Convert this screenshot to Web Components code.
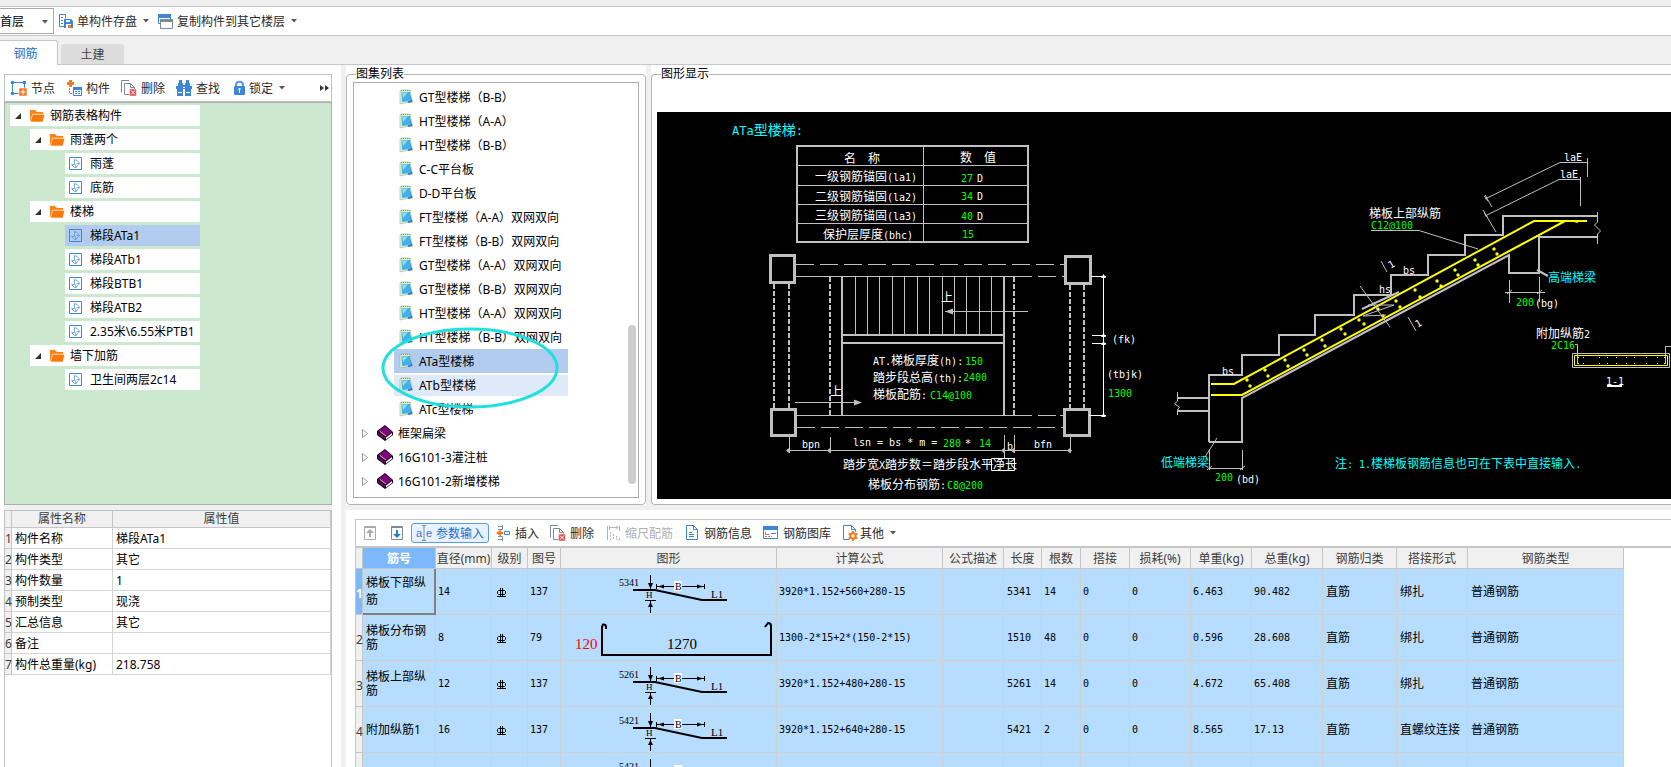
<!DOCTYPE html>
<html lang="zh-CN">
<head>
<meta charset="utf-8">
<title>钢筋表格构件</title>
<style>
html,body{height:100%;margin:0}
body{font:12px/16px "Noto Sans","Noto Sans CJK SC",sans-serif;color:#000;background:#f0f0f0;overflow:hidden;
--line:#c5c6ca;--frame:#acacac;--face:#f0f0f0}
</style>
</head>
<body>
<app-shell></app-shell>
<script>
const ICONS={
save:'<path fill="none" stroke="#3d85d6" d="M5.500 13.500h-5v-12h6v4M2 4.500h2M2 7.500h2M2 10.500h2"/><path fill="#3d85d6" d="M5 6h7l2 2v7H5z"/><path fill="#fff" d="M7 7h4v2H7zM7 11h5v4H7z"/><path fill="#f47a20" d="M9 12h3v3H9z"/>',
copy:'<path fill="#fff" stroke="#3d85d6" d="M-.5 1.500h12v9h-12z"/><path fill="#3d85d6" d="M-1 1h13v4H-1z"/><path fill="#fff" stroke="#7c8c96" d="M1.500 6.500h12v9h-12z"/><path fill="#7c8c96" d="M1 6h13v3H1z"/>',
node:'<path fill="none" stroke="#3d85d6" d="M1.500 2.500h12v11h-12z"/><path fill="#3d85d6" d="M0 1h3v3H0zM12 1h3v3h-3zM0 12h3v3H0z"/><path fill="#f47a20" stroke="#fff" stroke-width=".5" d="M8 8h8v8H8z"/><path stroke="#fff" d="M12 9.500v5M9.500 12h5"/>',
part:'<path fill="#f47a20" d="M3 0h3v2h2v3H6v2H3V5H1V2h2z"/><path fill="none" stroke="#7c8c96" stroke-dasharray="2 1" d="M3.500 8v5.500H7"/><path fill="#fff" stroke="#3d85d6" d="M7.500 7.500h8v8h-8z"/><path fill="#3d85d6" d="M7 7h9v3H7zM9 11h2v1H9zM12 11h2v1h-2zM9 13h2v1H9zM12 13h2v1h-2z"/>',
del:'<path fill="#fff" stroke="#7c8c96" d="M.5 12.500V.5H8M3.500 14.500v-11h6l4 4v7z"/><path fill="none" stroke="#7c8c96" d="M9.500 3.500v4h4"/><path fill="#d9534f" stroke="#fff" stroke-width=".5" d="M8.500 9h7v7h-7z"/><path stroke="#fff" d="M10 10.500l4 4M14 10.500l-4 4"/>',
find:'<path fill="#3d85d6" d="M3 0h3v3h1v2h2V3h1V0h3v3h1v3h2v3h-1v7H9V9H7v7H1V9H0V6h2V3h1z"/><path fill="#fff" d="M2 12h4v1H2zM10 12h4v1h-4zM7 7h2v1H7z"/>',
lock:'<path fill="none" stroke="#5b9bd5" stroke-width="2" d="M5 7V5c0-4.500 7-4.500 7 0v2"/><rect x="3" y="6" width="11" height="9" rx="1" fill="#3d85d6"/><path fill="#fff" d="M7.500 8h2v2h-2zM8 10h1v3H8z"/>',
up:'<path fill="#fff" stroke="#aaa" d="M2.500 1.500h11v13h-11z"/><path fill="#aaa" d="M3 2h10v1H3zM8 4l4 4H9v4H7V8H4z"/>',
down:'<path fill="#fff" stroke="#7c8c96" d="M2.500 1.500h11v13h-11z"/><path fill="#7c8c96" d="M3 2h10v1H3z"/><path fill="#2f78cc" d="M8 13l4-4H9V5H7v4H4z"/>',
ae:'<text x="0" y="12" font-family="Liberation Sans" font-size="11" fill="#2f78cc">a</text><text x="10" y="12" font-family="Liberation Sans" font-size="11" fill="#2f78cc">e</text><path fill="none" stroke="#7c8c96" d="M6 .5h4M8 .5v15M6 15.500h4"/>',
insert:'<path fill="none" stroke="#7c8c96" d="M3 1.500h4.500v3H3M3 11.500h4.500v3H3M7.500 0v2M7.500 14v2"/><path fill="#f47a20" d="M1 8l5-3.500V7h2v2H6v2.500z"/><path fill="none" stroke="#3d85d6" d="M9.500 6.500h5v3h-5z"/>',
scale:'<g fill="none" stroke="#b5b5b5"><path d="M2.500 1v14M5 2.500h8M4.500 1v4M14.500 1v5M11 .5l2 2-2 2"/><path d="M5.500 7v8M8.500 9v6M11.500 11v4M14.500 13v2" stroke-dasharray="2 1"/></g>',
info:'<path fill="#fff" stroke="#3d85d6" d="M2.500.5h7l4 4v10h-11z"/><path fill="none" stroke="#3d85d6" d="M9.500.5v4h4M5 7.500h3M5 9.500h5M5 11.500h5"/>',
lib:'<path fill="#fff" stroke="#3d85d6" d="M.5 2.500h14v11H.5z"/><path fill="#3d85d6" d="M0 1h15v4H0z"/><path fill="none" stroke="#7c8c96" d="M2.500 7v2.500h4"/><path stroke="#f47a20" stroke-dasharray="2 1" d="M2 11.500h7"/><path stroke="#3d85d6" d="M8 8.500h5"/>',
other:'<path fill="#fff" stroke="#3d85d6" d="M1.500.5h8l4 4v10h-12z"/><path fill="none" stroke="#3d85d6" d="M9.500.5v4h4"/><circle cx="11" cy="11" r="5" fill="#fff"/><path stroke="#f47a20" stroke-width="2" d="M11 6v10M6.700 8.500l8.600 5M6.700 13.500l8.600-5"/><circle cx="11" cy="11" r="2.700" fill="#fff" stroke="#f47a20" stroke-width="2"/>',
folder:'<path fill="#f9861a" d="M1 2h5l2 2h6v2H4L2 13H1z"/><path fill="#f9780a" stroke="#fff" stroke-width=".6" d="M3.500 6.300H15.700L14 14H1.500z"/>',
leaf:'<path fill="none" stroke="#3d85d6" d="M1.500 1.500h12v12h-12z"/><path fill="none" stroke="#5b9bd5" stroke-width=".8" d="M6.500 3.500v5H3.500M6 4l3 0M11.500 7.500H8.500M7.500 11.500v-3M8.500 4l3.500 3.500-4.500 4M3.500 8.500l3 3h2"/>',
note:'<path fill="#e4efc4" stroke="#9ab0a0" stroke-width=".6" d="M1 2.500l1-1.500h9l2.500 12L5 14l-4 1z"/><path fill="#3a6fc4" d="M10 3l3.500 10L9 14z"/><path fill="#3fb2ea" d="M2.500 3h8.500l1 9-9 1z"/><path fill="#8edaf6" d="M3 3.500h6L4 9z"/><path stroke="#b58b50" stroke-dasharray="1 1" d="M2 1.500h9"/>',
book:'<path fill="#000" d="M0 6L8 0l8 7v3l-8 6-8-6z"/><path fill="#800080" d="M1 6l7-5 7 6-6 4.500z"/><path fill="#fff" d="M9 12.500l6-4.500v2l-6 4.500z"/><path fill="#800080" d="M1 7.500l7 5v2L1 9.500z"/><path stroke="#fff" stroke-width=".7" d="M3 6.500l6 4.500"/>'
};
const svgIcon=n=>`<svg class="i" width="16" height="16" viewBox="0 0 16 16" overflow="visible" aria-hidden="true">${ICONS[n]}</svg>`;
const CARET='<svg width="6" height="4" viewBox="0 0 6 4" aria-hidden="true"><path fill="#555" d="M0 0h6L3 3.500z"/></svg>';
const define=(name,render)=>customElements.define(name,class extends HTMLElement{
  constructor(){super();this.attachShadow({mode:"open"})}
  connectedCallback(){this.shadowRoot.innerHTML=render(this)}
});

define("tool-button",el=>`<style>
:host{display:block;flex:none}
button{display:flex;align-items:center;gap:4px;height:20px;padding:0 4px;border:1px solid transparent;border-radius:3px;background:none;font:inherit;color:#2b2b2b;white-space:nowrap}
:host([active]) button{border-color:#5a9be0;background:#e8f2fd;color:#1a6fd0}
:host([menu]) button{gap:2px}
button:disabled{color:#b0b0b0}
.t{padding-top:2px}
.i{flex:none;display:block} .c{margin-left:4px;display:flex}
</style><button type="button" ${el.hasAttribute("off")?"disabled":""} ${el.title?`aria-label="${el.title}"`:""}>${svgIcon(el.getAttribute("icon"))}${el.title?"":'<span class="t"><slot></slot></span>'}${el.hasAttribute("menu")?`<span class="c">${CARET}</span>`:""}</button>`);

define("top-bar",()=>`<style>
:host{display:block;padding-top:6px;background:var(--face)}
.bar{display:flex;align-items:center;height:28px;background:#fff;border:1px solid var(--line);border-width:1px 0}
.s{position:relative;display:flex}
select{appearance:none;box-sizing:border-box;width:54px;height:26px;border:1px solid #aaa;border-left:0;background:#fff;font:inherit;padding:2px 0 0;margin:0;color:#000}
.s svg{position:absolute;right:6px;top:12px}
</style><div class="bar"><span class="s"><select aria-label="楼层"><option>首层</option></select>${CARET}</span>
<tool-button icon="save" menu>单构件存盘</tool-button><tool-button icon="copy" menu>复制构件到其它楼层</tool-button></div>`);

define("tab-strip",()=>`<style>
:host{display:flex;align-items:flex-end;gap:3px;height:28px;border-bottom:1px solid var(--line);background:var(--face)}
button{box-sizing:border-box;border:0;font:inherit;padding:1px 0 0;margin:0}
.on{width:58px;height:25px;margin-bottom:-1px;background:#fff;color:#1a6fd0;border:1px solid var(--line);border-width:1px 1px 0 0;border-radius:0 3px 0 0;padding:2px 6px 0 0}
.off{width:63px;height:20px;background:#dcdcdc;color:#444;border-radius:3px 3px 0 0;padding-top:2px}
</style><button type="button" class="on">钢筋</button><button type="button" class="off">土建</button>`);

const TREE=[[0,"钢筋表格构件"],[1,"雨蓬两个"],[2,"雨蓬"],[2,"底筋"],[1,"楼梯"],[2,"梯段ATa1",1],[2,"梯段ATb1"],[2,"梯段BTB1"],[2,"梯段ATB2"],[2,"2.35米\\6.55米PTB1"],[1,"墙下加筋"],[2,"卫生间两层2c14"]];
define("member-tree",()=>`<style>
:host{display:flex;flex-direction:column;flex:1;min-height:0}
.bar{display:flex;align-items:center;gap:1px;height:26px;border:1px solid #c0c0c0;background:#fff;padding-left:1px}
.more{margin-left:auto;margin-right:2px;border:0;background:none;padding:0;display:flex}
ul{list-style:none;margin:0;padding:2px 0 0 5px;flex:1;border:1px solid var(--frame);background:#cce8cf}
li{display:flex;align-items:center;box-sizing:border-box;width:190px;height:21px;margin-bottom:3px;background:#fff;white-space:nowrap}
li.l1{margin-left:20px;width:170px} li.l2{margin-left:55px;width:135px;padding-left:3px;gap:6px}
li.sel{background:#b1ccee}
li>span:last-child{padding-top:1px}
.e{margin:0 8px 0 5px} .f{display:flex;margin-right:5px}
</style><div class="bar"><tool-button icon="node">节点</tool-button><tool-button icon="part">构件</tool-button><tool-button icon="del">删除</tool-button><tool-button icon="find">查找</tool-button><tool-button icon="lock" menu>锁定</tool-button><button type="button" class="more" aria-label="更多"><svg width="9" height="6" viewBox="0 0 9 6"><path fill="#333" d="M0 0l4 3-4 3zM5 0l4 3-4 3z"/></svg></button></div>
<ul>${TREE.map(([l,t,s])=>`<li class="l${l}${s?" sel":""}">${l<2?`<svg class="e" width="6" height="6" viewBox="0 0 6 6"><path fill="#333" d="M6 0v6H0z"/></svg><span class="f">${svgIcon("folder")}</span>`:svgIcon("leaf")}<span>${t}</span></li>`).join("")}</ul>`);

const PROPS=[["构件名称","梯段ATa1"],["构件类型","其它"],["构件数量","1"],["预制类型","现浇"],["汇总信息","其它"],["备注",""],["构件总重量(kg)","218.758"]];
define("property-grid",()=>`<style>
:host{display:block;height:257px;border:1px solid #c0c0c0;border-bottom:0;background:#fff;box-sizing:border-box}
table{width:100%;table-layout:fixed;border-collapse:separate;border-spacing:0}
th,td{box-sizing:border-box;height:21px;padding:2px 0 0 3px;border:solid #d4d4d4;border-width:0 1px 1px 0;text-align:left;font-weight:400;white-space:nowrap}
thead th{height:17px;padding:0;background:var(--face);border-color:var(--line);text-align:center;color:#3c3c3c;line-height:16px}
tbody th{padding:2px 0 0;background:var(--face);color:#3c3c3c;text-align:center;border-color:var(--line)}
</style><table><colgroup><col style="width:7px"><col style="width:101px"><col></colgroup><thead><tr><th></th><th>属性名称</th><th>属性值</th></tr></thead><tbody>${PROPS.map((p,i)=>`<tr><th>${i+1}</th><td>${p[0]}</td><td>${p[1]}</td></tr>`).join("")}</tbody></table>`);

define("group-box",el=>`<style>
:host{display:flex;background:#fff;padding-top:1px;min-height:0;min-width:0}
fieldset{flex:1;display:flex;flex-direction:column;min-width:0;min-height:0;margin:0;padding:0 6px;border:1px solid #b4b4b4;border-radius:4px}
:host([open-end]) fieldset{border-right:0;border-radius:4px 0 0 4px;padding:0 0 5px 5px}
legend{padding:0;margin-left:3px;line-height:16px}
:host([open-end]) legend{margin-left:4px}
</style><fieldset><legend>${el.getAttribute("label")}</legend><slot></slot></fieldset>`);

const ATLAS=["GT型楼梯（B-B）","HT型楼梯（A-A）","HT型楼梯（B-B）","C-C平台板","D-D平台板","FT型楼梯（A-A）双网双向","FT型楼梯（B-B）双网双向","GT型楼梯（A-A）双网双向","GT型楼梯（B-B）双网双向","HT型楼梯（A-A）双网双向","HT型楼梯（B-B）双网双向","ATa型楼梯","ATb型楼梯","ATc型楼梯"];
define("atlas-list",()=>`<style>
:host{display:block;position:relative;flex:1;margin-bottom:6px;border:1px solid var(--frame);overflow:hidden}
ul{list-style:none;margin:0;padding:2px 0 0 40px}
li{display:flex;align-items:center;gap:4px;box-sizing:border-box;height:24px;width:174px;padding-left:5px;white-space:nowrap}
li span{padding-top:1px}
.sel{background:#b1ccee} .hot{background:linear-gradient(#dee9fa,#dee9fa) 0 2px/100% 21px no-repeat}
.b{margin-left:-40px;padding-left:8px;gap:5px} .b .i{margin-left:4px}
.thumb{position:absolute;right:2px;top:242px;width:8px;height:159px;border-radius:4px;background:#cdcdcd}
.ring{position:absolute;left:27px;top:243px}
</style><ul>${ATLAS.map((t,i)=>`<li class="${i==11?"sel":i==12?"hot":""}">${svgIcon("note")}<span>${t}</span></li>`).join("")}${["框架扁梁","16G101-3灌注桩","16G101-2新增楼梯"].map(t=>`<li class="b"><svg width="6" height="9" viewBox="0 0 6 9"><path fill="#fff" stroke="#999" d="M.5.5v8l5-4z"/></svg>${svgIcon("book")}<span>${t}</span></li>`).join("")}</ul>
<div class="thumb"></div><svg class="ring" width="180" height="84"><ellipse cx="89" cy="42" rx="87" ry="39" fill="none" stroke="#1fdfdf" stroke-width="3"/></svg>`);

/* CAD drawing helpers: Latin runs use a 6px-pitch monospace, Chinese runs a 12px face */
const esc=s=>s.replace(/</g,"&lt;");
const T=(x,y,s,c="w",big)=>`<text x="${x}" y="${y+5}" class="${c}">${s.match(/[\x00-\x7f]+|[^\x00-\x7f]+/g).map(r=>/[\x00-\x7f]/.test(r)?`<tspan class="${big?"m2":"m"}">${esc(r)}</tspan>`:`<tspan class="${big?"z2":"z"}">${r}</tspan>`).join("")}</text>`;
const P=(d,k="a")=>`<path class="${k}" d="${d}"/>`;
const DOTS=[[1247,380,1250,386],[1265,370,1268,376],[1285,360,1288,366],[1304,350,1307,355],[1322,340,1325,346],[1341,329,1345,334],[1359,320,1364,324],[1378,309,1383,316],[1396,301,1400,307],[1415,290,1420,297],[1437,281,1441,286],[1455,270,1458,275],[1475,260,1478,265],[1494,249,1497,254]];
const drawing=()=>[
T(732,130,"ATa型楼梯:","c",1),
P("M797 146H1028V242H797Z","b"),P("M923.500 146V242M797 165.500H1028M797 185.500H1028M797 204.500H1028M797 223.500H1028"),
T(844,158,"名　称"),T(960,157,"数　值"),
T(815,176,"一级钢筋锚固(la1)"),T(815,196,"二级钢筋锚固(la2)"),T(815,215,"三级钢筋锚固(la3)"),T(823,234,"保护层厚度(bhc)"),
T(961,177,"27","g"),T(977,177,"D"),T(961,195,"34","g"),T(977,195,"D"),T(961,215,"40","g"),T(977,215,"D"),T(962,233,"15","g"),
P("M770.500 255.500h24v27h-24zM1065.500 256.500h25v27h-25zM771.500 409.500h24v26h-24zM1064.500 409.500h25v26h-25z","k"),
P("M796 264.500H1064M797 427.500H1063","a dash"),P("M796 276.500H1032M1038 276.500h18M1062 276.500h3M797 415.500H1032M1038 415.500h18M1060 415.500h3"),
P("M774 284V408M789 284V408M1070 285V408M1084 285V408M830 277V415M1014 277V415","b dv"),
P("M842 277V415M1004 277V415M842 335H1004M842 343H1004","b"),
P([855,867,879,892,904,917,929,942,954,966,979,991].map(x=>`M${x}.500 277V334`).join("")),
T(941,297,"上"),T(830,391,"上"),P("M945 311.500H1028M795 402.500H861"),P("M945 311.500l8-3v6zM862 402.500l-8-3v6z","f"),
P("M1103.500 276V416M1091 276.500h15M1092 335.500h14M1092 343.500h14M1089 415.500h17","h"),P("M1101 278h5l-2.500-4zM1101 337h5l-2.500-4zM1101 345h5l-2.500-4zM1101 417h5l-2.500-4z","fw"),
T(1112,338,"(fk)"),T(1107,373,"(tbjk)"),T(1108,392,"1300","g"),
T(873,360,"AT.梯板厚度(h):"),T(965,360,"150","g"),T(873,377,"踏步段总高(th):"),T(963,376,"2400","g"),T(873,394,"梯板配筋:"),T(930,394,"C14@100","g"),
P("M787 450.500H1072M789.500 436V453M830.500 437V453M1004.500 435V458M1014.500 435V453M1070.500 436V453"),
P("M789 448v5l-3-2.500zM830 448v5l-3-2.500zM1004 448v5l-3-2.500zM1014 448v5l-3-2.500zM1070 448v5l-3-2.500z","f"),
T(802,443,"bpn"),T(853,441,"lsn = bs * m ="),T(943,442,"280","g"),T(965,442,"*"),T(979,442,"14","g"),T(1007,445,"b"),T(1034,443,"bfn"),
T(843,464,"踏步宽X踏步数＝踏步段水平净长"),P("M991.500 458.500h23v12h-23z","h"),
T(868,484,"梯板分布钢筋:"),T(947,484,"C8@200","g"),
P("M1209 442V375H1242V355H1279V335H1315V315H1354V295H1391V275H1428V255H1465V235H1503V216H1598M1209 442H1242V398L1509 255V273H1539V237H1598M1177 398H1209M1177 411H1209","b"),
P("M1177.500 392V401l-3 3 5 3-2 3V415M1597.500 212V222l-3 3 6 6-3 3V244"),
P("M1211 384H1234L1534 221H1587M1211 395H1242L1565 221M1574 221l4 1","y"),
DOTS.map(([a,b,c,d])=>`<circle class="yf" cx="${a}" cy="${b}" r="1.700"/><circle class="yf" cx="${c}" cy="${d}" r="1.700"/>`).join(""),
P("M1587.500 158V177M1588 162.500H1560L1485 199M1485 195L1492 207M1484 196l4 5M1580.500 177V206M1580 179.500H1559L1485 216M1483 210L1496 232M1484 213l4 5"),
T(1564,156,"laE"),T(1560,173,"laE"),T(1369,213,"梯板上部纵筋"),T(1371,224,"C12@100","g"),P("M1371 230.500H1419L1478 249"),
T(1403,269,"bs"),T(1379,288,"hs"),T(1222,370,"bs"),
P("M1381 261L1387 272M1408 317L1416 331M1360 286L1390 327M1363 316L1394 305H1368M1363 316L1386 315"),P("M1362 309L1399 292","b"),
'<text class="w m" transform="rotate(-30 1391 264)" x="1388" y="268">1</text><text class="w m" transform="rotate(-30 1418 323)" x="1415" y="327">1</text>',
T(1548,277,"高端梯梁","c"),P("M1537 270L1548 276","b"),P("M1505 292.500H1545M1509.500 280V303M1539.500 277V302M1507 294l5-4M1537 294l5-4"),
T(1516,301,"200","g"),T(1535,302,"(bg)"),
T(1536,333,"附加纵筋2"),T(1551,344,"2C16","g"),P("M1575 344.500h2.500V364M1671 346.500h-5.500V364M1572.500 353.500h97v14h-97z"),P("M1574.500 355.500h93v10h-93z","yy"),
P([1578,1583,1599,1607,1616,1626,1634,1646,1657,1664].map(x=>`M${x} 357.500h1M${x} 363.500h1`).join(""),"yy"),
T(1606,380,"1-1"),P("M1607 386H1622","hw"),
T(1161,462,"低端梯梁","c"),P("M1217 438L1205 457M1209.500 450V470M1242.500 450V470M1209 468.500H1243M1207 470l5-4M1240 470l5-4"),
T(1215,476,"200","g"),T(1236,478,"(bd)"),
T(1335,463,"注: 1.楼梯板钢筋信息也可在下表中直接输入.","c")
].join("");
define("cad-view",()=>`<style>
:host{display:block;flex:1;min-height:0;margin-top:30px;background:#000;overflow:hidden}
svg{display:block}
path{fill:none;stroke:#c0c0c0} .b{stroke-width:2} .k{stroke-width:3} .dash{stroke-dasharray:18 6} .dv{stroke-dasharray:5 2}
.h{stroke:#fff} .hw{stroke:#fff;stroke-width:2} .f{fill:#c0c0c0;stroke:none} .fw{fill:#fff;stroke:none}
.y{stroke:#ff0;stroke-width:2} .yy{stroke:#ff0} .yf{fill:#ff0}
text{white-space:pre} .w{fill:#fff} .g{fill:#0f0} .c{fill:#0ff}
.m{font:10px "DejaVu Sans Mono",monospace} .m2{font:12px "DejaVu Sans Mono",monospace}
.z{font:12px "Noto Sans CJK SC",sans-serif} .z2{font:14px "Noto Sans CJK SC",sans-serif}
</style><svg width="1014" height="387" viewBox="657 112 1014 387" role="img" aria-label="ATa型楼梯">${drawing()}</svg>`);

const shape=n=>`<svg width="215" height="45" viewBox="0 0 215 45"><g font-family="Liberation Serif" fill="#000"><text x="58" y="17" font-size="10">${n}</text><text x="85" y="29" font-size="9">H</text><text x="150" y="29" font-size="11">L1</text></g>
<path fill="none" stroke="#000" stroke-width="2" d="M72 21H94L141 31H166"/><path fill="none" stroke="#000" d="M89.500 6V20M84 20.500h11M84 31.500h11M89.500 31V44M95 17.500H144M95.500 15v5M143.500 15v5"/>
<path d="M87 14h5l-2.500 6zM87 38h5l-2.500-5zM97 17.500l6-2v4zM142 17.500l-6-2v4z"/><path fill="#fff" d="M113 12h8v10h-8z"/><text x="114" y="21" font-family="Liberation Serif" font-size="10">B</text></svg>`;
const ushape=`<svg width="215" height="45" viewBox="0 0 215 45"><path fill="none" stroke="#000" stroke-width="2" d="M45 14V12Q45 9 42 9.500L41 12V40H210V11Q210 8 207 8L204 12"/><g font-family="Liberation Serif" font-size="15"><text x="14" y="34" fill="#f00">120</text><text x="106" y="34">1270</text></g></svg>`;
const GRADE='<svg width="10" height="10" viewBox="0 0 10 10" role="img" aria-label="C"><path fill="none" stroke="#000" d="M1.500 2.500h6l1 1v2l-1 1h-6l-1-1v-2zM3.500 0v8M5.500 0v8M0 8.500h9"/></svg>';
const COLS=[["筋号",73],["直径(mm)",56],["级别",36],["图号",33],["图形",216],["计算公式",166],["公式描述",61],["长度",38],["根数",39],["搭接",49],["损耗(%)",61],["单重(kg)",61],["总重(kg)",71],["钢筋归类",74],["搭接形式",71],["钢筋类型",156]];
const ROWS=[["梯板下部纵筋","14",GRADE,"137",shape(5341),"3920*1.152+560+280-15","","5341","14","0","0","6.463","90.482","直筋","绑扎","普通钢筋"],
["梯板分布钢筋","8",GRADE,"79",ushape,"1300-2*15+2*(150-2*15)","","1510","48","0","0","0.596","28.608","直筋","绑扎","普通钢筋"],
["梯板上部纵筋","12",GRADE,"137",shape(5261),"3920*1.152+480+280-15","","5261","14","0","0","4.672","65.408","直筋","绑扎","普通钢筋"],
["附加纵筋1","16",GRADE,"137",shape(5421),"3920*1.152+640+280-15","","5421","2","0","0","8.565","17.13","直筋","直螺纹连接","普通钢筋"],
["","","","",shape(5421),"","","","","","","","","","",""]];
define("rebar-table",()=>`<style>
:host{display:flex;flex-direction:column;box-sizing:border-box;height:257px;padding:9px 0 0 9px;background:#fff;overflow:hidden}
.bar{display:flex;flex:none;align-items:center;gap:1px;height:26px;padding-left:1px;border:1px solid var(--line);border-width:1px 0 2px 1px}
table{table-layout:fixed;width:1269px;border-collapse:separate;border-spacing:0;border-left:1px solid var(--line)}
th,td{box-sizing:border-box;padding:0 0 0 3px;border:solid #d0d0d0;border-width:0 1px 1px 0;font-weight:400;white-space:nowrap}
thead th{height:21px;padding:2px 0 0;background:var(--face);color:#3c3c3c;border-color:var(--line);overflow:hidden}
thead .on,tbody .on{background:#7db8fb;color:#fff;font-weight:700}
tbody th{padding:4px 0 0;background:var(--face);color:#3c3c3c;border-color:var(--line)}
td{height:46px;background:#b6dcfe;text-align:left}
td.n{font:10px/16px "DejaVu Sans Mono",monospace;padding-left:2px}
td.t{white-space:normal;line-height:14px;padding-right:6px}
tr:first-child td.t{line-height:17px;border:2px solid #808080;border-width:0 2px 2px 0;padding-right:4px}
td.v{padding:0} td svg{display:block} td.q{padding:2px 0 0 5px} td.r{padding-left:3px}
</style><div class="bar"><tool-button icon="up" title="上移"></tool-button><tool-button icon="down" title="下移"></tool-button><tool-button icon="ae" active>参数输入</tool-button><tool-button icon="insert">插入</tool-button><tool-button icon="del">删除</tool-button><tool-button icon="scale" off>缩尺配筋</tool-button><tool-button icon="info">钢筋信息</tool-button><tool-button icon="lib">钢筋图库</tool-button><tool-button icon="other" menu>其他</tool-button></div>
<table><colgroup><col style="width:7px">${COLS.map(c=>`<col style="width:${c[1]}px">`).join("")}</colgroup><thead><tr><th></th>${COLS.map((c,i)=>`<th class="${i?"":"on"}">${c[0]}</th>`).join("")}</tr></thead>
<tbody>${ROWS.map((r,i)=>`<tr><th class="${i?"":"on"}">${i<4?i+1:""}</th>${r.map((c,j)=>`<td class="${j==0?"t":j==2?"q":j==4?"v":j==7?"n r":j<13?"n":""}">${c}</td>`).join("")}</tr>`).join("")}</tbody></table>`);

define("app-shell",()=>`<style>
:host{display:flex;flex-direction:column;height:100vh;overflow:hidden}
main{flex:1;display:flex;min-height:0}
.left{display:flex;flex-direction:column;flex:none;box-sizing:border-box;width:341px;padding:9px 9px 0 4px;background:#fff}
.sep{height:5px;flex:none;background:var(--face)}
.right{flex:1;min-width:0;display:flex;flex-direction:column;gap:5px;padding-left:5px;background:var(--face)}
.upper{flex:1;min-height:0;display:flex;gap:5px}
.atlas{flex:none;width:300px}.view{flex:1}
</style><top-bar></top-bar><tab-strip></tab-strip>
<main><div class="left"><member-tree></member-tree><div class="sep"></div><property-grid></property-grid></div>
<div class="right"><div class="upper"><group-box class="atlas" label="图集列表"><atlas-list></atlas-list></group-box><group-box class="view" open-end label="图形显示"><cad-view></cad-view></group-box></div><rebar-table></rebar-table></div></main>`);
</script>
</body>
</html>
